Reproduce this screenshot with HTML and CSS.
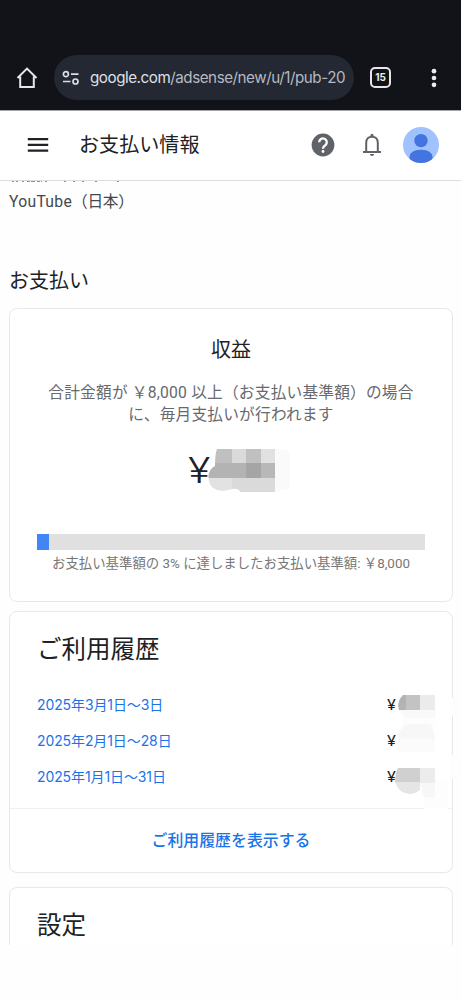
FILE: index.html
```html
<!DOCTYPE html>
<html lang="ja">
<head>
<meta charset="utf-8">
<title>お支払い情報</title>
<link rel="stylesheet" href="styles.css">
</head>
<body>
<header class="browser">
  <svg class="home" width="24" height="24" viewBox="0 0 24 24"><path d="M5.2 10.5V21.1H18.8V10.5M2.5 12 12 2.6 21.500 12" fill="none" stroke="#e6e6ea" stroke-width="2"/></svg>
  <div class="address">
    <svg width="18" height="16" viewBox="0 0 18 16" fill="none" stroke="#dcdde3" stroke-width="1.7"><circle cx="3.900" cy="4.200" r="2.500"/><path d="M9 4.200h7.500M1 11.500h7.500"/><circle cx="13.500" cy="11.500" r="2.500"/></svg>
    <div class="url"><span class="host">google.com</span>/adsense/new/u/1/pub-20</div>
  </div>
  <div class="tabs">15</div>
  <svg class="more" width="6" height="20" viewBox="0 0 6 20" fill="#ececf0"><circle cx="3" cy="3.200" r="2.350"/><circle cx="3" cy="10" r="2.350"/><circle cx="3" cy="16.800" r="2.350"/></svg>
</header>
<div class="appbar">
  <svg class="menu" width="22" height="16" viewBox="0 0 22 16"><path d="M.8 2.100h20.400M.8 7.900h20.400M.8 13.600h20.400" stroke="#202124" stroke-width="2.300"/></svg>
  <h1>お支払い情報</h1>
  <svg class="help" width="24" height="24" viewBox="0 0 24 24"><circle cx="12" cy="12" r="11.400" fill="#5f6368"/><path d="M8.200 9.300a3.800 3.800 0 1 1 6.300 2.800C13.100 13.200 12 13.700 12 15.700" fill="none" stroke="#fff" stroke-width="2.300"/><circle cx="12" cy="18.500" r="1.400" fill="#fff"/></svg>
  <svg class="bell" width="20" height="24" viewBox="0 0 20 24"><path d="M1 18.900h18M4.200 18.500V9.700C4.200 6 6.600 3.700 10 3.700s5.800 2.300 5.800 6v8.800" fill="none" stroke="#5f6368" stroke-width="2"/><path d="M8.500 3.500V2.300a1.500 1.500 0 0 1 3 0v1.200zM7.900 21h4.200a2.100 2.100 0 0 1-4.200 0z" fill="#5f6368"/></svg>
  <svg class="avatar" width="36" height="36" viewBox="0 0 36 36"><defs><clipPath id="disc"><circle cx="18" cy="18" r="18"/></clipPath></defs><g clip-path="url(#disc)"><path fill="#a0c2ff" d="M0 0h36v36H0z"/><circle cx="18" cy="13.600" r="6.700" fill="#4374e0"/><rect x="6.500" y="22.800" width="23" height="18" rx="10.500" ry="7" fill="#4374e0"/></g></svg>
</div>
<main>
  <svg class="scrolled" width="125" height="2" viewBox="0 0 125 2"><path d="M3 .5h2M7 .5h2M13 .5h2M18 .5h3M22 .5h4M28 .5h3M32 .5h1M36 .5h2M55 .5h2M64 .5h2M73 .5h2M86 .5h2M108 .5h2" stroke="#909296"/></svg>
  <p class="account">YouTube<span>（日本）</span></p>
  <h2>お支払い</h2>
  <section class="card earnings">
    <h3>収益</h3>
    <p class="desc">合計金額が ￥8,000 以上（お支払い基準額）の場合<br>に、毎月支払いが行われます</p>
    <div class="amount"><span class="yen">¥</span>
      <svg class="mosaic" width="84" height="46" viewBox="0 0 84 46"><defs><clipPath id="m1"><path d="M9 1H75Q82 1 82 10V36Q82 42 74 42L67 44H32Q31 40 24 41C12 45 3 42 1 33C-1 25 3 20 7 18Q7 6 9 1Z"/></clipPath></defs><g clip-path="url(#m1)"><path fill="#c0c0c0" d="M0 0h24v16H0zM38 0h15v16H38z"/><path fill="#dadada" d="M24 0h14v16H24z"/><path fill="#e1e1e1" d="M53 0h14v16H53z"/><path fill="#b3b3b3" d="M0 15h38v15H0z"/><path fill="#a5a5a5" d="M38 15h15v15H38z"/><path fill="#b8b8b8" d="M53 15h14v15H53z"/><path fill="#e2e2e2" d="M0 30h24v16H0z"/><path fill="#dadada" d="M24 30h43v16H24z"/><path fill="#fafafa" d="M67 0h17v46H67z"/></g></svg>
    </div>
    <div class="track"><div class="fill"></div></div>
    <p class="caption">お支払い基準額の 3% に達しましたお支払い基準額: ￥8,000</p>
  </section>
  <section class="card history">
    <h3>ご利用履歴</h3>
    <div class="row"><a>2025年3月1日〜3日</a><span>¥</span></div>
    <div class="row"><a>2025年2月1日〜28日</a><span>¥</span></div>
    <div class="row"><a>2025年1月1日〜31日</a><span>¥</span></div>
    <div class="action"><a>ご利用履歴を表示する</a></div>
    <svg class="redaction" width="66" height="118" viewBox="0 0 66 118"><path fill="#fdfdfd" d="M4 16h34v17H4zM54 3h4q8 8 0 18h-4zM52 60h14v24H52zM26 85h24v29H26z"/><path fill="#b3b3b3" d="M8 0H5Q-2 7 1 15h7z"/><path fill="#c3c3c3" d="M8 0h14v15H8z"/><path fill="#ebebeb" d="M22 0h15v15H22z"/><path fill="#f9f9f9" d="M1 15h36v8H8z"/><path fill="#f7f7f7" d="M10 29h22q4 5 5 15H0q0-11 10-15z"/><path fill="#fbfbfb" d="M0 44h37v13H0z"/><path fill="#d0d0d0" d="M0 73h22v15H-3q0-10 3-15z"/><path fill="#ececec" d="M22 73h15v15H22z"/><path fill="#e5e5e5" d="M-3 87h25v8q-5 4-10 4Q1 99-3 87z"/><path fill="#f7f7f7" d="M22 88h15v14H26z"/></svg>
  </section>
  <section class="card settings"><h3>設定</h3></section>
</main>
</body>
</html>
```
FILE: styles.css
```css
* { box-sizing: border-box; }
body, h1, h2, h3, p { margin: 0; font-weight: 400; }
body { width: 461px; height: 999px; overflow: hidden; background: #fefefe; color: #202124; font-family: Roboto, "Noto Sans CJK JP", sans-serif; }
svg { display: block; flex: none; }

.browser { height: 111px; padding: 45px 0 0 15px; background: #121318; border-bottom: 1px solid #a3a3aa; display: flex; align-items: center; }
.address { width: 300px; height: 45px; margin-left: 15px; padding-left: 8px; border-radius: 23px; background: #232833; display: flex; align-items: center; }
.url { margin-left: 10px; font: 15.200px/24px Inter, sans-serif; letter-spacing: -.46px; color: #b6b9c2; white-space: nowrap; }
.host { color: #dfe0e6; }
.tabs { width: 21px; height: 21px; margin-left: 16px; border: 2px solid #e6e6ea; border-radius: 5px; color: #ececf0; font: 700 10px/17px Inter, sans-serif; text-align: center; }
.more { margin-left: 40px; }

.appbar { height: 70px; padding: 0 22px 2px 27px; border-bottom: 1px solid #dcdcdc; display: flex; align-items: center; background: #fff; }
.appbar h1 { margin-left: 30px; font-size: 20.1px; line-height: 30px; flex: 1; }
.bell { margin-left: 27px; }
.avatar { margin-left: 21px; }

main { height: 764px; overflow: hidden; padding: 0 8px 0 9px; }
.account { margin-top: 7px; font-size: 15.700px; line-height: 24px; color: #45484d; letter-spacing: .3px; }
.account span { letter-spacing: -.3px; }
h2 { margin-top: 51px; font-size: 20px; line-height: 32px; }
.card { border: 1px solid #e8e8ea; border-radius: 8px; background: #fff; position: relative; }
.earnings { height: 294px; margin-top: 11px; padding: 26px 27px 0; text-align: center; }
.earnings h3 { font-size: 20px; line-height: 30px; }
.desc { margin: 17px -10px 0; font-size: 15.7px; line-height: 22px; letter-spacing: .2px; color: #66696e; white-space: nowrap; }
.amount { display: flex; height: 48px; margin: 22px 0 0 151px; align-items: flex-start; }
.yen { width: 20px; font: 300 35px/45px Inter, sans-serif; text-align: left; transform: scaleX(1.18); transform-origin: left; }
.track { height: 16px; margin-top: 38px; background: #e0e0e0; }
.fill { width: 3%; height: 100%; background: #4285f4; }
.caption { margin-top: 4px; font-size: 13.4px; line-height: 20px; color: #777; white-space: nowrap; }

.history { height: 262px; margin-top: 9px; }
.history h3 { height: 75px; padding: 20px 27px 0; font-size: 24.500px; line-height: 36px; }
.row { height: 36px; padding: 0 52px 0 27px; display: flex; justify-content: space-between; align-items: center; font: 14px/20px Inter, "Noto Sans CJK JP", sans-serif; letter-spacing: -.1px; }
.row a, .action a { color: #1a73e8; }
.row span { width: 12px; transform: scaleX(1.15); }
.action { height: 61px; margin-top: 13px; border-top: 1px solid #f0f0f1; display: flex; align-items: center; justify-content: center; font-size: 15.900px; font-weight: 500; }
.redaction { position: absolute; left: 388px; top: 83px; overflow: visible; }
.settings { height: 120px; margin-top: 14px; padding: 20px 27px; }
.settings h3 { font-size: 24.500px; line-height: 36px; }
```
